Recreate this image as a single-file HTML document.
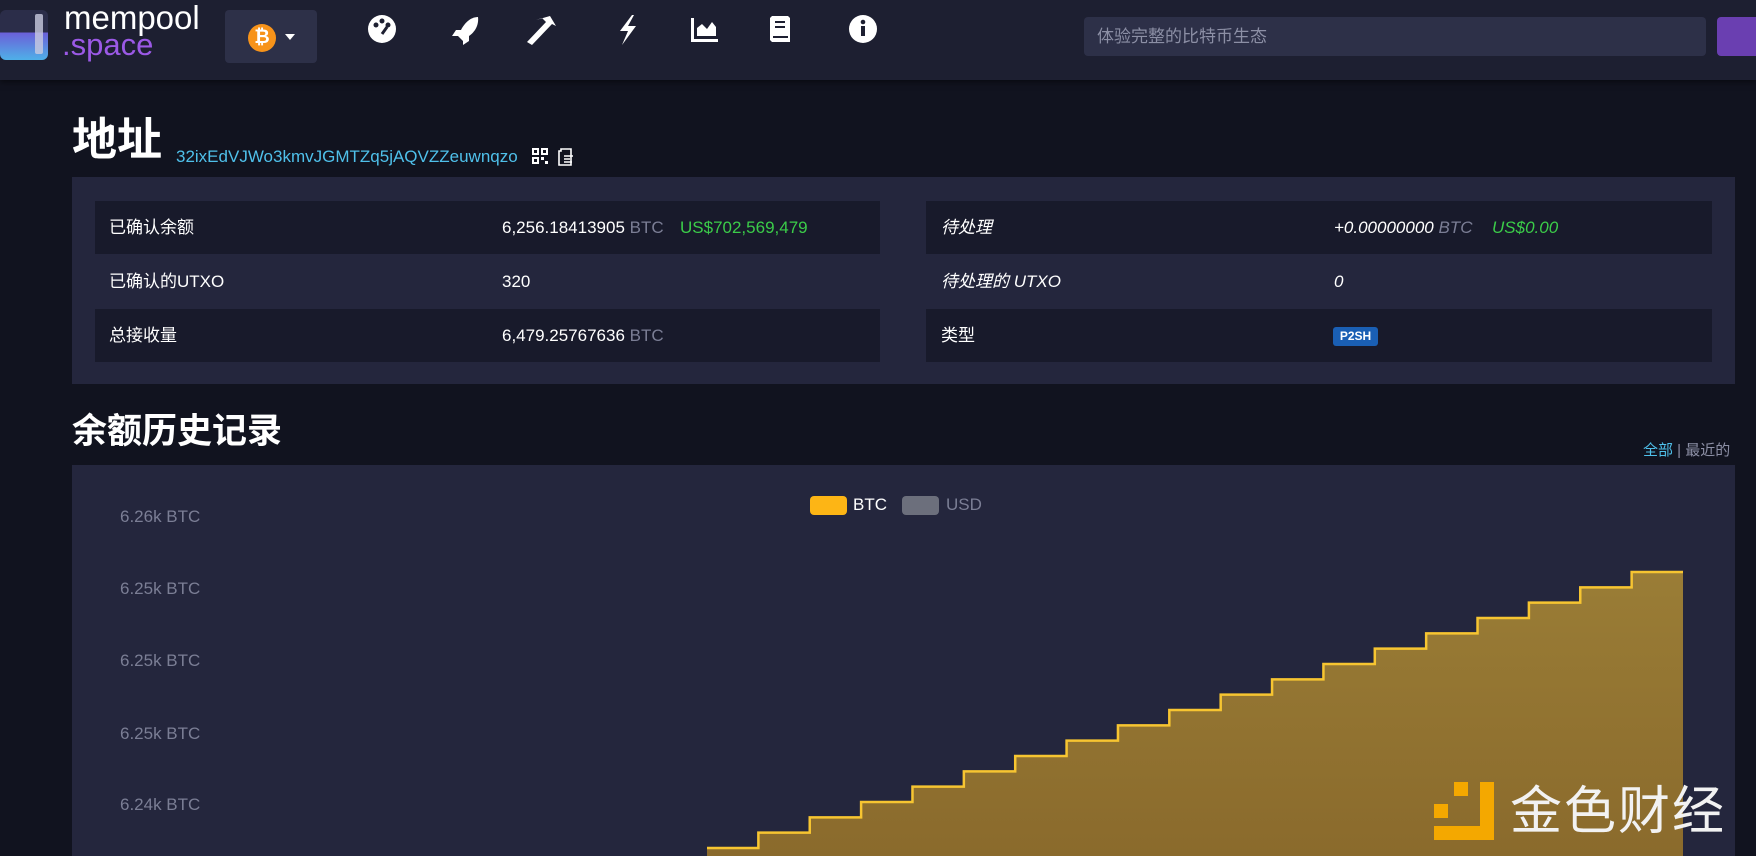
<!DOCTYPE html>
<html><head><meta charset="utf-8"><style>
*{margin:0;padding:0;box-sizing:border-box}
body{width:1756px;height:856px;overflow:hidden;background:#11131f;font-family:"Liberation Sans","Noto Sans CJK SC",sans-serif;color:#fff;position:relative}
.abs{position:absolute}
.nav{left:0;top:0;width:1756px;height:80px;background:#1d1f31;box-shadow:0 2px 6px rgba(0,0,0,.5)}
.row{position:absolute;height:53px;font-size:17px;line-height:53px}
.row span{position:absolute;white-space:nowrap}
.g{color:#7b7e95}.u{color:#3bcc49}
</style></head><body>
<div class="abs nav"></div>
<div class="abs" style="left:0;top:10px;width:48px;height:50px;border-radius:6px;background:linear-gradient(#2b2d49 0 45%,#6b5fd8 45%,#4fb0e8 100%)"></div>
<div class="abs" style="left:35px;top:14px;width:8px;height:40px;background:#c9cbe0;border-radius:2px;opacity:.8"></div>
<div class="abs" style="left:64px;top:2px;font-size:33px;line-height:32px;color:#fff">mempool</div>
<div class="abs" style="left:62px;top:29px;font-size:31px;line-height:32px;color:#9b59e6">.space</div>
<div class="abs" style="left:225px;top:10px;width:92px;height:53px;background:#2d3048;border-radius:4px"></div>
<div class="abs" style="left:248px;top:24px;width:28px;height:28px;border-radius:50%;background:#f7931a;color:#fff;font-weight:bold;font-size:19px;text-align:center;line-height:28px">₿</div>
<div class="abs" style="left:285px;top:34px;border:5px solid transparent;border-top:6px solid #fff"></div>
<svg class="abs" style="left:366px;top:12px" width="520" height="34" fill="#fff">
<circle cx="16" cy="17" r="14"/><circle cx="10" cy="13" r="2.5" fill="#1d1f31"/><circle cx="16" cy="9" r="2.5" fill="#1d1f31"/><circle cx="22" cy="13" r="2.5" fill="#1d1f31"/><path d="M16 22 L21 15" stroke="#1d1f31" stroke-width="3"/>
<path d="M112 5 C104 5 98 12 95 18 L90 18 L86 24 L92 24 L97 29 L97 33 L103 29 L103 24 C109 20 113 13 112 5Z"/>
<path d="M161 30 L180 10 L176 6 L170 8 L184 4 L190 14 L186 12 L166 33Z"/>
<path d="M266 3 L254 19 L262 19 L256 33 L270 14 L262 14 L268 3Z"/>
<path d="M325 6 L325 30 L352 30 L352 27 L328 27 L328 6Z M331 24 L331 16 L336 12 L341 17 L346 10 L350 15 L350 24Z"/>
<path d="M406 4 L422 4 L424 6 L424 30 L406 30 L404 28 L404 6Z"/><path d="M409 10 L419 10 M409 15 L419 15 M407 25 L422 25" stroke="#1d1f31" stroke-width="2"/>
<circle cx="497" cy="17" r="14"/><rect x="495" y="14" width="4" height="10" fill="#1d1f31"/><circle cx="497" cy="10" r="2.3" fill="#1d1f31"/>
</svg>
<div class="abs" style="left:1084px;top:17px;width:622px;height:39px;background:#2d3048;border-radius:4px;font-size:17px;color:#8c8fa5;line-height:39px;padding-left:13px">体验完整的比特币生态</div>
<div class="abs" style="left:1717px;top:17px;width:50px;height:39px;background:#6a3fb1;border-radius:4px"></div>
<div class="abs" style="left:72px;top:113px;font-size:45px;line-height:54px;font-weight:bold">地址</div>
<div class="abs" style="left:176px;top:147px;font-size:17px;color:#4fc0ea">32ixEdVJWo3kmvJGMTZq5jAQVZZeuwnqzo</div>
<svg class="abs" style="left:531px;top:147px" width="50" height="20" fill="#fff"><rect x="1" y="1" width="7" height="7"/><rect x="10" y="1" width="7" height="7"/><rect x="1" y="10" width="7" height="7"/><rect x="10" y="10" width="3" height="3"/><rect x="14" y="14" width="3" height="3"/><rect x="3" y="3" width="3" height="3" fill="#11131f"/><rect x="12" y="3" width="3" height="3" fill="#11131f"/><rect x="3" y="12" width="3" height="3" fill="#11131f"/><path d="M30 2 h10 v16 h-12 v-14 h2Z" stroke="#fff" stroke-width="1.6" fill="none"/><path d="M33 9 h9 M33 12 h6 M33 15 h8" stroke="#fff" stroke-width="1.5"/></svg>
<div class="abs" style="left:72px;top:177px;width:1663px;height:207px;background:#24263d"></div>
<div class="abs" style="left:95px;top:201px;width:785px;height:53px;background:#181a2b"></div>
<div class="abs" style="left:95px;top:309px;width:785px;height:53px;background:#181a2b"></div>
<div class="abs" style="left:926px;top:201px;width:786px;height:53px;background:#181a2b"></div>
<div class="abs" style="left:926px;top:309px;width:786px;height:53px;background:#181a2b"></div>
<div class="row" style="left:0;top:201px;width:1756px"><span style="left:109px">已确认余额</span><span style="left:502px">6,256.18413905 <i class="g" style="font-style:normal">BTC</i></span><span class="u" style="left:680px">US$702,569,479</span><span style="left:941px;font-style:italic">待处理</span><span style="left:1334px;font-style:italic">+0.00000000 <b class="g" style="font-weight:normal">BTC</b></span><span class="u" style="left:1492px;font-style:italic">US$0.00</span></div>
<div class="row" style="left:0;top:255px;width:1756px"><span style="left:109px">已确认的UTXO</span><span style="left:502px">320</span><span style="left:941px;font-style:italic">待处理的 UTXO</span><span style="left:1334px;font-style:italic">0</span></div>
<div class="row" style="left:0;top:309px;width:1756px"><span style="left:109px">总接收量</span><span style="left:502px">6,479.25767636 <i class="g" style="font-style:normal">BTC</i></span><span style="left:941px">类型</span></div>
<div class="abs" style="left:1333px;top:327px;width:45px;height:19px;background:#1a5fb4;border-radius:3px;font-size:12px;font-weight:bold;text-align:center;line-height:19px">P2SH</div>
<div class="abs" style="left:72px;top:408px;font-size:35px;line-height:48px;font-weight:bold">余额历史记录</div>
<div class="abs" style="left:1643px;top:439px;font-size:15px;color:#8c8fa5"><span style="color:#4fc0ea">全部</span> | 最近的</div>
<div class="abs" style="left:72px;top:465px;width:1663px;height:391px;background:#24263d"></div>
<div class="abs" style="left:810px;top:496px;width:37px;height:19px;border-radius:4px;background:#fdb515"></div>
<div class="abs" style="left:853px;top:495px;font-size:17px;color:#fff">BTC</div>
<div class="abs" style="left:902px;top:496px;width:37px;height:19px;border-radius:4px;background:#6c6f7c"></div>
<div class="abs" style="left:946px;top:495px;font-size:17px;color:#7b7e95">USD</div>
<div class="abs" style="left:120px;top:507px;font-size:17px;color:#7b7e95;line-height:20px">6.26k BTC</div>
<div class="abs" style="left:120px;top:579px;font-size:17px;color:#7b7e95;line-height:20px">6.25k BTC</div>
<div class="abs" style="left:120px;top:651px;font-size:17px;color:#7b7e95;line-height:20px">6.25k BTC</div>
<div class="abs" style="left:120px;top:724px;font-size:17px;color:#7b7e95;line-height:20px">6.25k BTC</div>
<div class="abs" style="left:120px;top:795px;font-size:17px;color:#7b7e95;line-height:20px">6.24k BTC</div>
<svg class="abs" style="left:0;top:0" width="1756" height="856"><defs><linearGradient id="gr" x1="0" y1="0" x2="0" y2="1"><stop offset="0" stop-color="#9a7d36"/><stop offset="1" stop-color="#8a6a2c"/></linearGradient></defs>
<path id="area" fill="url(#gr)" stroke="none" d=""/><path id="ln" fill="none" stroke="#f7c531" stroke-width="2.5" d=""/>
</svg>
<script>
(function(){var x0=707,x1=1683,n=19,y0=848,y1=572,d="",l="";var w=(x1-x0)/n;for(var i=0;i<n;i++){var y=y0-i*(y0-y1)/(n-1);var xa=x0+i*w,xb=xa+w;if(i==0){d="M"+xa+" 860 L"+xa+" "+y;l="M"+xa+" "+y;}else{d+=" L"+xa+" "+y;l+=" L"+xa+" "+y;}d+=" L"+xb+" "+y;l+=" L"+xb+" "+y;}d+=" L"+x1+" 860Z";document.getElementById("area").setAttribute("d",d);document.getElementById("ln").setAttribute("d",l);})();
</script>
<svg class="abs" style="left:1432px;top:780px" width="70" height="62"><rect x="22" y="2" width="14" height="14" fill="#f4a800"/><path d="M48 2 h14 v58 h-60 v-14 h46Z" fill="#f4a800"/><rect x="2" y="24" width="14" height="14" fill="#f4a800"/></svg>
<div class="abs" style="left:1510px;top:782px;font-size:52px;line-height:60px;color:#f2f2f2;letter-spacing:2px">金色财经</div>
</body></html>
